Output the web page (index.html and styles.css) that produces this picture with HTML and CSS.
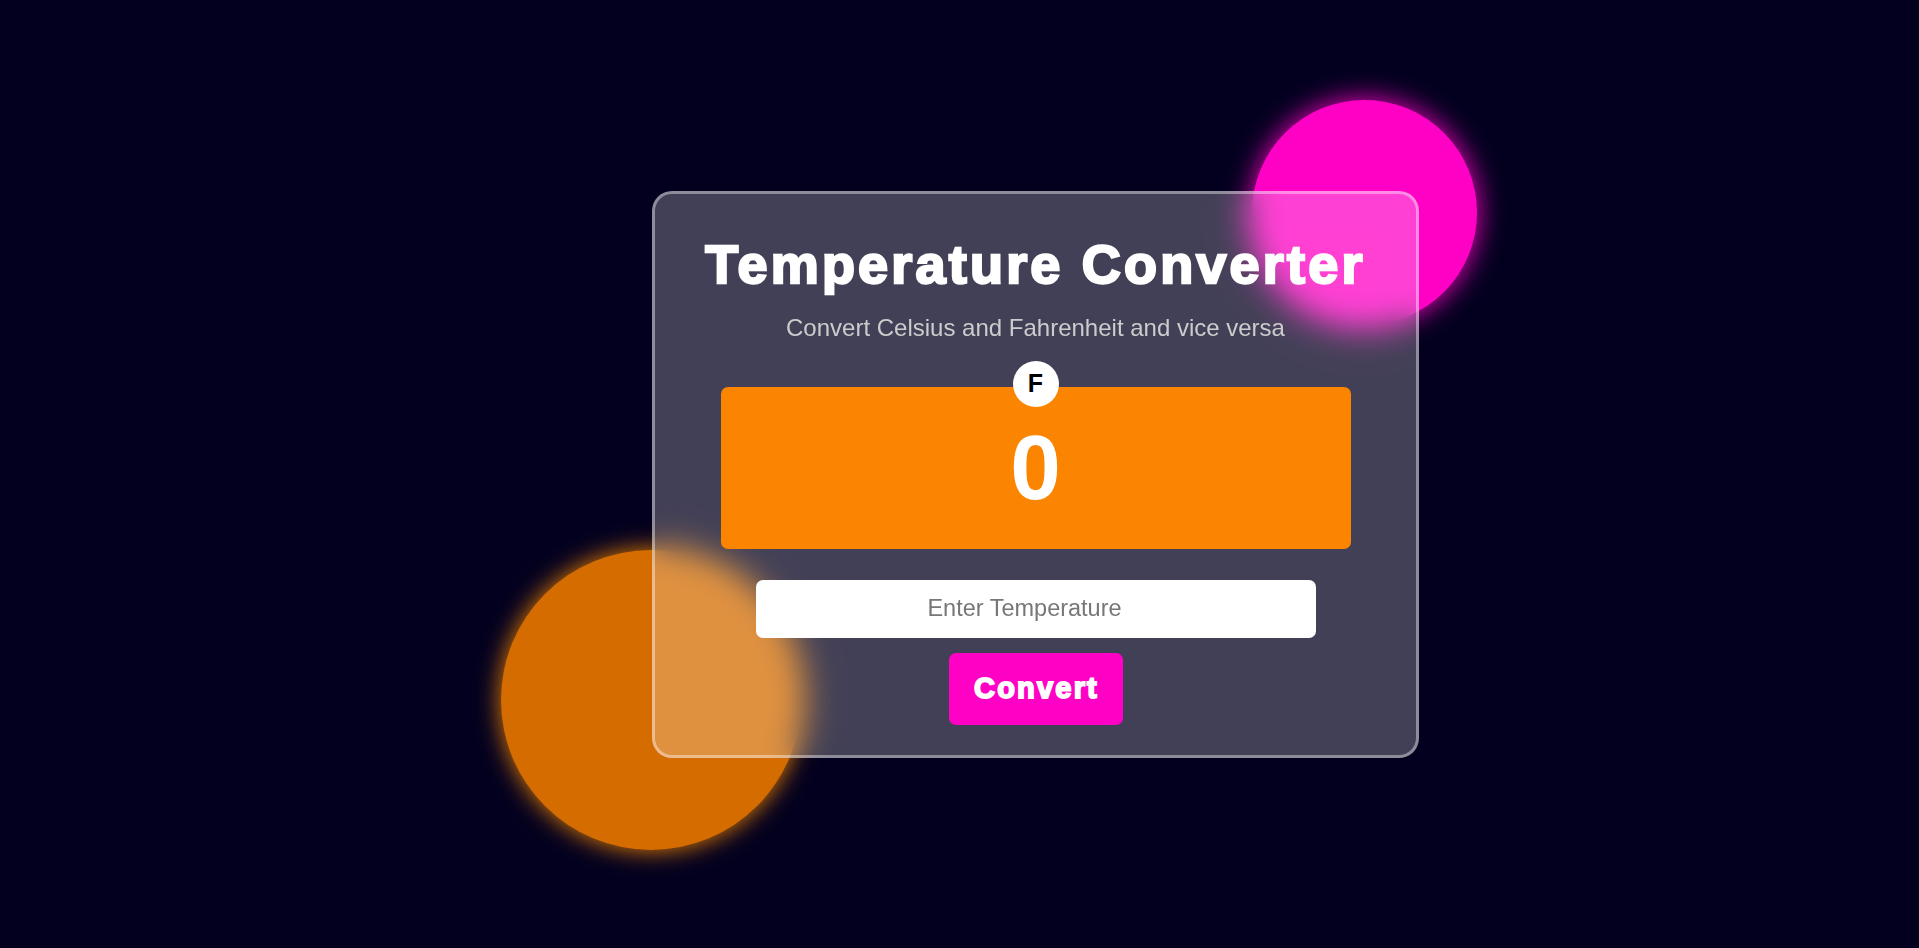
FILE: index.html
```html
<!DOCTYPE html>
<html lang="en">
<head>
<meta charset="UTF-8">
<title>Temperature Converter</title>
<link rel="stylesheet" href="styles.css">
</head>
<body>
<div class="scene">
  <div class="blob blob-pink"></div>
  <div class="blob blob-orange"></div>
  <main class="card">
    <h1 class="title">Temperature Converter</h1>
    <p class="subtitle">Convert Celsius and Fahrenheit and vice versa</p>
    <div class="result">
      <span class="unit">F</span>
      <span class="value">0</span>
    </div>
    <input class="temp-input" type="text" placeholder="Enter Temperature">
    <button class="convert-btn" type="button">Convert</button>
  </main>
</div>
</body>
</html>
```
FILE: styles.css
```css
* {
  box-sizing: border-box;
}

html, body {
  margin: 0;
  padding: 0;
  height: 100%;
}

body {
  background: #03001f;
  font-family: "Liberation Sans", Arial, sans-serif;
  display: flex;
  align-items: center;
  justify-content: center;
  overflow: hidden;
}

.scene {
  position: relative;
  width: 767px;
  height: 567px;
  margin-left: 152px;
}

.blob {
  position: absolute;
  border-radius: 50%;
  z-index: 0;
}

.blob-pink {
  left: 600px;
  top: -91px;
  width: 225px;
  height: 225px;
  background: #ff00c5;
  box-shadow: 0 0 28px #ff00c5;
}

.blob-orange {
  left: -151px;
  top: 359px;
  width: 300px;
  height: 300px;
  background: #d46c00;
  box-shadow: 0 0 24px #f08400;
}

.card {
  position: relative;
  z-index: 1;
  width: 767px;
  height: 567px;
  border: 3px solid rgba(255, 255, 255, 0.4);
  border-radius: 20px;
  background: rgba(255, 255, 255, 0.25);
  backdrop-filter: blur(15px);
  -webkit-backdrop-filter: blur(15px);
  display: flex;
  flex-direction: column;
  align-items: center;
  padding: 39px 0 30px;
}

.title {
  margin: 0;
  font-size: 54px;
  line-height: 62px;
  font-weight: 700;
  letter-spacing: 3.2px;
  color: #fff;
  -webkit-text-stroke: 2.4px #fff;
  white-space: nowrap;
}

.subtitle {
  margin: 19px 0 0;
  font-size: 24px;
  line-height: 28px;
  color: #cccccc;
}

.result {
  position: relative;
  margin-top: 45px;
  width: 630px;
  height: 162px;
  background: #fb8500;
  border-radius: 7px;
  display: flex;
  align-items: center;
  justify-content: center;
}

.unit {
  position: absolute;
  left: 50%;
  top: -26px;
  margin-left: -23px;
  width: 46px;
  height: 46px;
  border-radius: 50%;
  background: #fff;
  color: #000;
  font-size: 25px;
  font-weight: 700;
  line-height: 1;
  display: flex;
  align-items: center;
  justify-content: center;
}

.value {
  color: #fff;
  font-size: 91px;
  font-weight: 700;
  line-height: 1;
}

.temp-input {
  margin-top: 31px;
  width: 560px;
  height: 58px;
  border: none;
  border-radius: 7px;
  background: #fff;
  font-family: "Liberation Sans", Arial, sans-serif;
  font-size: 23.5px;
  text-align: center;
  padding: 0 22px 0 0;
  color: #333;
  outline: none;
}

.temp-input::placeholder {
  color: #777777;
}

.convert-btn {
  margin-top: 15px;
  width: 174px;
  height: 72px;
  border: none;
  border-radius: 7px;
  background: #ff00c5;
  color: #fff;
  font-family: "Liberation Sans", Arial, sans-serif;
  font-size: 29px;
  font-weight: 700;
  letter-spacing: 2.2px;
  -webkit-text-stroke: 1.8px #fff;
  padding: 0 0 0 2px;
  cursor: pointer;
}
```
